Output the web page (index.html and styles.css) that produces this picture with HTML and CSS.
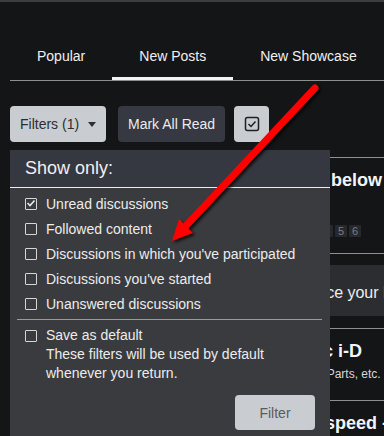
FILE: index.html
```html
<!DOCTYPE html>
<html>
<head>
<meta charset="utf-8">
<link rel="stylesheet" href="styles.css">
</head>
<body>
<div class="topbar"></div>
<nav class="tabs">
  <a class="tab">Popular</a>
  <a class="tab active">New Posts</a>
  <a class="tab">New Showcase</a>
</nav>

<div class="toolbar">
  <div class="filter-wrap">
    <button class="btn btn-light btn-filters">Filters (1) <span class="caret"></span></button>
    <div class="dropdown">
      <div class="dd-head">Show only:</div>
      <div class="dd-body">
        <div class="opt"><span class="cb checked"><svg viewBox="0 0 12 12" width="12" height="12"><polyline points="2.5,6 5,8.5 9.5,3.5" fill="none" stroke="#ececec" stroke-width="1.6"/></svg></span>Unread discussions</div>
        <div class="opt"><span class="cb"></span>Followed content</div>
        <div class="opt"><span class="cb"></span>Discussions in which you've participated</div>
        <div class="opt"><span class="cb"></span>Discussions you've started</div>
        <div class="opt"><span class="cb"></span>Unanswered discussions</div>
        <div class="dd-sep"></div>
        <div class="opt-save">
          <span class="cb"></span>
          <div class="save-text">
            <div>Save as default</div>
            <div>These filters will be used by default whenever you return.</div>
          </div>
        </div>
        <div class="dd-foot"><button class="btn btn-light btn-submit">Filter</button></div>
      </div>
    </div>
  </div>
  <button class="btn btn-dark">Mark All Read</button>
  <button class="btn btn-light btn-icon"><svg viewBox="0 0 16 16" width="16" height="16"><rect x="1.5" y="1.5" width="13" height="13" rx="2" fill="none" stroke="#1f2023" stroke-width="1.5"/><polyline points="4.5,8 7,10.5 11.5,5.5" fill="none" stroke="#1f2023" stroke-width="1.5"/></svg></button>
</div>

<div class="threads">
  <div class="thread thread-first">
    <div class="title t-below">Post a pic below</div>
    <div class="pages"><span>1</span><span>2</span><span>3</span><span>4</span><span>5</span><span>6</span></div>
  </div>
  <div class="band"><span class="band-text">Place your <a class="link">build</a></span></div>
  <div class="thread thread-second">
    <div class="title t-id">Magic i-D</div>
    <div class="meta m-id">Cases, Parts, etc.</div>
  </div>
  <div class="thread">
    <div class="title t-speed">Full speed - ahead</div>
  </div>
</div>

<svg class="arrow" width="384" height="436" viewBox="0 0 384 436">
  <g class="arrow-g">
    <line x1="315" y1="88" x2="184" y2="228" stroke="#ff0000" stroke-width="7" stroke-linecap="round"/>
    <polygon points="172,241 179,219 193,233" fill="#ff0000"/>
  </g>
</svg>
</body>
</html>
```
FILE: styles.css
```css
* { box-sizing: border-box; }
html, body { margin: 0; padding: 0; }
body {
  width: 384px;
  height: 436px;
  overflow: hidden;
  background: #141517;
  font-family: "Liberation Sans", Arial, sans-serif;
  font-size: 14px;
  color: #ececec;
  position: relative;
}
.topbar { height: 2px; background: #3c3d41; }

.tabs {
  display: flex;
  margin: 46px 0 0 10px;
  border-bottom: 1px solid #8f8f8f;
}
.tab {
  padding: 0 27px 13px;
  line-height: 16px;
  font-size: 14px;
  color: #f0f0f0;
  border-bottom: 3px solid transparent;
  white-space: nowrap;
}
.tab.active { border-bottom-color: #f2f2f2; }

.toolbar {
  display: flex;
  margin: 25px 0 0 10px;
  height: 36px;
}
.filter-wrap { position: relative; }
.btn {
  height: 36px;
  border: none;
  border-radius: 4px;
  font-family: inherit;
  font-size: 14px;
  padding: 0 10px;
  display: flex;
  align-items: center;
  white-space: nowrap;
}
.btn-light { background: #c9ccd0; color: #2d2e31; }
.btn-dark { background: #363842; color: #ececec; margin-left: 12px; }
.btn-filters { width: 96px; gap: 9px; }
.caret {
  width: 0; height: 0;
  border-left: 4px solid transparent;
  border-right: 4px solid transparent;
  border-top: 5px solid #2d2e31;
}
.btn-icon { width: 35px; margin-left: 9px; justify-content: center; padding: 0; }

.dropdown {
  position: absolute;
  top: 44px;
  left: 0;
  width: 320px;
  z-index: 5;
  background: #3a3b3e;
  padding-bottom: 20px;
}
.dd-head {
  height: 38px;
  background: #363841;
  border-bottom: 1px solid #ececec;
  font-size: 18px;
  padding-left: 15px;
  display: flex;
  align-items: center;
  padding-bottom: 1px;
  color: #f0f0f0;
}
.dd-body { padding-top: 3px; }
.opt {
  height: 25px;
  display: flex;
  align-items: center;
  gap: 9px;
  padding-left: 15px;
  white-space: nowrap;
}
.cb {
  width: 12px;
  height: 12px;
  border: 1.5px solid #d6d6d6;
  border-radius: 1px;
  flex: none;
  position: relative;
}
.cb svg { position: absolute; left: -1.5px; top: -1.5px; }
.dd-sep {
  height: 1px;
  background: #9a9a9a;
  margin: 3px 8px 6px 7px;
}
.opt-save {
  display: flex;
  gap: 9px;
  padding-left: 15px;
  line-height: 19px;
}
.opt-save .cb { margin-top: 3.5px; }
.save-text { width: 250px; }
.dd-foot {
  display: flex;
  justify-content: flex-end;
  padding-right: 15px;
  margin-top: 12px;
}
.btn-submit {
  width: 80px;
  height: 35px;
  justify-content: center;
  color: #5a5b5e;
}

.threads { margin: 15px 0 0 10px; }
.thread {
  border-top: 1px solid #8f8f8f;
  padding-top: 11px;
  white-space: nowrap;
}
.thread-first { border-bottom: 1px solid #8f8f8f; padding-bottom: 16px; }
.thread-second { padding-bottom: 18px; }
.title {
  font-weight: bold;
  font-size: 18px;
  line-height: 22px;
  color: #f2f4f8;
}
.t-below { margin-left: 231px; }
.t-id { margin-left: 272px; }
.t-speed { margin-left: 278px; }
.pages {
  display: flex;
  gap: 2px;
  margin: 34px 0 0 269px;
}
.pages span {
  width: 12px;
  height: 12px;
  background: #26282c;
  color: #7c7d80;
  font-size: 11px;
  line-height: 12px;
  text-align: center;
  border-radius: 1px;
}
.band {
  margin-top: 11px;
  margin-bottom: 12px;
  height: 51px;
  background: #2c2d31;
  display: flex;
  align-items: center;
  white-space: nowrap;
  font-size: 16px;
  padding-top: 4px;
}
.band-text { margin-left: 293px; color: #eeeeee; }
.link { color: #3d9ae8; }
.meta {
  font-size: 12px;
  line-height: 16px;
  margin-top: 4px;
  color: #d8d8d8;
}
.m-id { margin-left: 276px; }

.arrow {
  position: absolute;
  left: 0;
  top: 0;
  z-index: 10;
  pointer-events: none;
}
.arrow-g { filter: drop-shadow(2px 2px 1.5px rgba(0,0,0,0.75)); }
```
